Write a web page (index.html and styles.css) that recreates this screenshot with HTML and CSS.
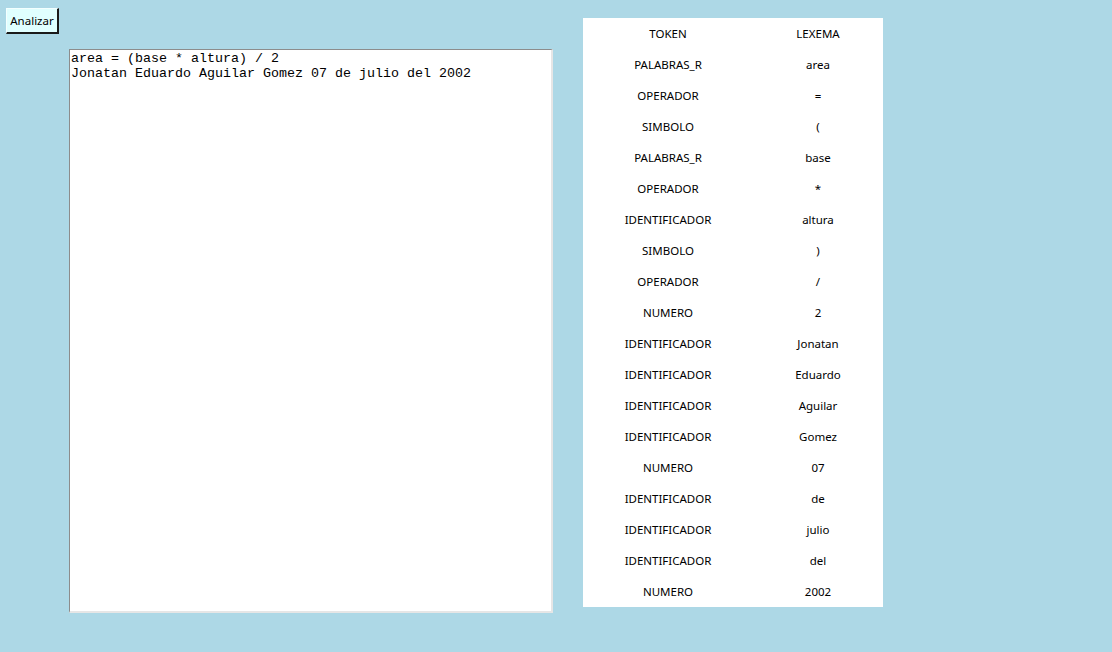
FILE: index.html
```html
<!DOCTYPE html>
<html lang="es">
<head>
<meta charset="utf-8">
<title>Analizador</title>
<link rel="stylesheet" href="styles.css">
</head>
<body>
<div class="page">
  <div class="editor-col">
    <button class="btn">Analizar</button>
    <textarea class="code" spellcheck="false">area = (base * altura) / 2
Jonatan Eduardo Aguilar Gomez 07 de julio del 2002</textarea>
  </div>
  <table class="tokens">
    <colgroup><col class="c1"><col class="c2"></colgroup>
    <tbody>
      <tr><td>TOKEN</td><td>LEXEMA</td></tr>
      <tr><td>PALABRAS_R</td><td>area</td></tr>
      <tr><td>OPERADOR</td><td>=</td></tr>
      <tr><td>SIMBOLO</td><td>(</td></tr>
      <tr><td>PALABRAS_R</td><td>base</td></tr>
      <tr><td>OPERADOR</td><td>*</td></tr>
      <tr><td>IDENTIFICADOR</td><td>altura</td></tr>
      <tr><td>SIMBOLO</td><td>)</td></tr>
      <tr><td>OPERADOR</td><td>/</td></tr>
      <tr><td>NUMERO</td><td>2</td></tr>
      <tr><td>IDENTIFICADOR</td><td>Jonatan</td></tr>
      <tr><td>IDENTIFICADOR</td><td>Eduardo</td></tr>
      <tr><td>IDENTIFICADOR</td><td>Aguilar</td></tr>
      <tr><td>IDENTIFICADOR</td><td>Gomez</td></tr>
      <tr><td>NUMERO</td><td>07</td></tr>
      <tr><td>IDENTIFICADOR</td><td>de</td></tr>
      <tr><td>IDENTIFICADOR</td><td>julio</td></tr>
      <tr><td>IDENTIFICADOR</td><td>del</td></tr>
      <tr><td>NUMERO</td><td>2002</td></tr>
    </tbody>
  </table>
</div>
</body>
</html>
```
FILE: styles.css
```css
html, body {
  margin: 0;
  padding: 0;
  background: #add8e6;
  height: 100%;
}
.page {
  display: flex;
  align-items: flex-start;
  padding: 8px 0 0 6px;
}
.editor-col {
  display: flex;
  flex-direction: column;
  align-items: flex-start;
}
.btn {
  box-sizing: border-box;
  width: 53px;
  height: 26px;
  margin: 0;
  padding: 0 0 1px;
  background: #e0ffff;
  border-style: solid;
  border-width: 1px 2px 2px 1px;
  border-color: #f4ffff #1a1a1a #1a1a1a #f4ffff;
  font-family: "Noto Sans", "DejaVu Sans", sans-serif;
  font-size: 11.5px;
  color: #000;
}
.code {
  box-sizing: border-box;
  width: 484px;
  height: 564px;
  margin: 15px 0 0 63px;
  padding: 1px 1px;
  border-style: solid;
  border-width: 1px 2px 2px 1px;
  border-color: #8c8c8c #e6e6e6 #e6e6e6 #8c8c8c;
  background: #fff;
  font-family: "Liberation Mono", "Courier New", monospace;
  font-size: 13.33px;
  line-height: 15px;
  color: #000;
  resize: none;
  outline: none;
}
.tokens {
  margin: 10px 0 0 30px;
  width: 300px;
  border-collapse: collapse;
  background: #fff;
  table-layout: fixed;
  font-family: "Noto Sans", "DejaVu Sans", sans-serif;
  font-size: 11.5px;
  color: #000;
}
.c1 { width: 170px; }
.c2 { width: 130px; }
.tokens td {
  height: 31px;
  padding: 0;
  text-align: center;
  vertical-align: middle;
}
```
